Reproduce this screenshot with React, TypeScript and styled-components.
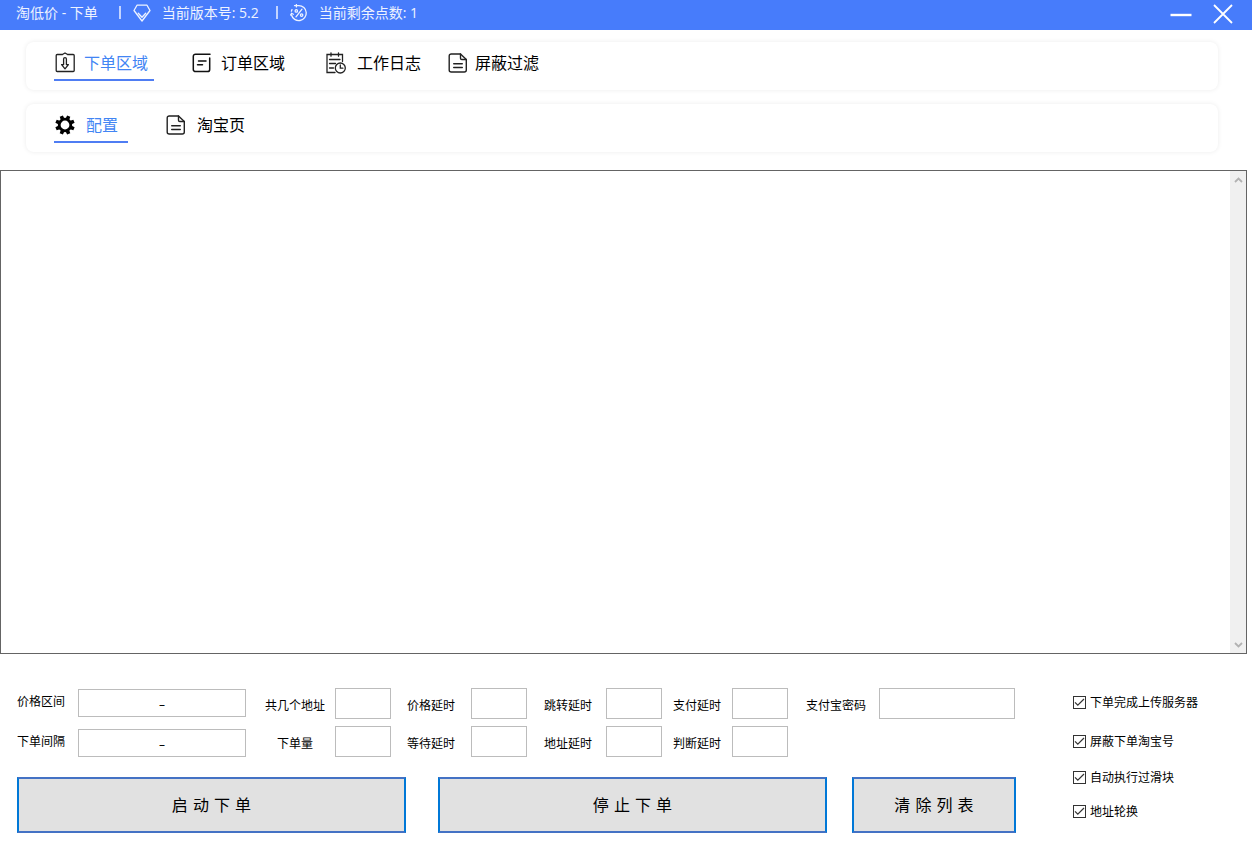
import React from "react";
import styled, { createGlobalStyle } from "styled-components";

const GlobalStyle = createGlobalStyle`
  *, *::before, *::after { box-sizing: border-box; }
  body {
    margin: 0;
    background: #fff;
    color: #000;
    font-family: "Open Sans", "Noto Sans CJK SC", sans-serif;
    font-size: 12px;
  }
  button, input { font: inherit; color: inherit; }
  svg { display: block; }
`;

const Page = styled.div`
  min-height: 100vh;
  display: flex;
  flex-direction: column;
`;

const TitleBar = styled.header`
  display: flex;
  align-items: center;
  height: 30px;
  flex: none;
  padding: 0 16px 2px;
  background: #477cfb;
  color: #eef3ff;
  font-size: 14px;
  line-height: 20px;
  white-space: nowrap;
`;

const TitleText = styled.h1`
  margin: 0 21px 2px 0;
  font-size: 14px;
  font-weight: 400;
`;

const TitleItem = styled.div`
  display: flex;
  align-items: center;
  gap: 11px;
  margin-right: 17px;
  padding: 0 0 2px 14px;
  position: relative;

  &::before {
    content: "";
    position: absolute;
    left: 0;
    top: 3px;
    width: 2px;
    height: 13px;
    background: #c3d4ff;
  }
`;

const WindowControls = styled.div`
  display: flex;
  margin-left: auto;
  gap: 16px;
`;

const WindowButton = styled.button`
  width: 26px;
  height: 26px;
  padding: 0;
  border: 0;
  background: none;
  display: grid;
  place-items: center;
`;

const TabPanel = styled.nav`
  display: flex;
  align-items: flex-start;
  height: 48px;
  flex: none;
  margin: 12px 34px 2px 26px;
  padding: 7px 28px 0;
  border-radius: 8px;
  background: #fff;
  box-shadow: 0 0 5px rgba(0, 0, 0, 0.08);
`;

const Tab = styled.a<{ $active?: boolean; $gap: number; $after: number; $end?: number }>`
  display: flex;
  align-items: center;
  gap: ${(p) => p.$gap}px;
  height: 32px;
  margin-right: ${(p) => p.$after}px;
  padding: 0 ${(p) => p.$end ?? 0}px 2px 1px;
  border-bottom: 2px solid ${(p) => (p.$active ? "#4f7df3" : "transparent")};
  color: #000;
  font-size: 16px;
  line-height: 24px;
  text-decoration: none;
  white-space: nowrap;

  span { color: ${(p) => (p.$active ? "#4285f4" : "#000")}; }
`;

const ListBox = styled.section`
  flex: 1;
  min-height: 200px;
  display: flex;
  justify-content: flex-end;
  margin: 16px 5px 0 0;
  border: 1px solid #646464;
`;

const ScrollTrack = styled.div`
  width: 16px;
  display: flex;
  flex-direction: column;
  justify-content: space-between;
  background: #f0f0f0;
`;

const ScrollButton = styled.button`
  height: 17px;
  padding: 0;
  border: 0;
  background: none;
  display: grid;
  place-items: center;
`;

const Controls = styled.form`
  display: flex;
  flex: none;
  padding: 34px 0 13px 17px;
`;

const MainControls = styled.div`
  flex: 1;
  min-width: 0;
`;

const Fields = styled.div`
  display: grid;
  grid-template-columns: 248fr 142fr 137fr 129fr 133fr 210fr;
  height: 69px;
  margin-bottom: 20px;
`;

const FieldGroup = styled.div<{ $after: number; $range?: boolean }>`
  display: flex;
  flex-direction: column;
  justify-content: ${(p) => (p.$range ? "flex-end" : "flex-start")};
  gap: ${(p) => (p.$range ? 12 : 7)}px;
  padding-right: ${(p) => p.$after}px;
`;

const Field = styled.div<{ $label: number; $range?: boolean }>`
  display: grid;
  grid-template-columns: ${(p) => p.$label}px 1fr;
  align-items: center;
  height: ${(p) => (p.$range ? 28 : 31)}px;

  label {
    padding: ${(p) => (p.$range ? "0 0 2px" : "4px 0 0")};
    line-height: 18px;
    white-space: nowrap;
  }
`;

const CenteredLabel = styled.label`
  margin-right: 10px;
  text-align: center;
`;

const TextInput = styled.input`
  width: 100%;
  min-width: 0;
  height: 100%;
  padding: 2px 4px 0;
  border: 1px solid #bcbcbc;
  border-radius: 0;
  background: #fff;
  text-align: center;
  outline: none;
`;

const Actions = styled.div`
  display: grid;
  grid-template-columns: 421fr 414fr 164fr;
`;

const ActionButton = styled.button<{ $after?: number }>`
  height: 56px;
  margin-right: ${(p) => p.$after ?? 0}px;
  padding: 2px 6px 0;
  border: 2px solid;
  border-color: #4472c4 #0078d7;
  background: #e1e1e1;
  font-family: "DejaVu Sans", "Noto Sans CJK SC", sans-serif;
  font-size: 16px;
  line-height: 24px;
`;

const Options = styled.div`
  display: grid;
  grid-template-rows: 39px 36px 34px 14px;
  width: 179px;
  margin: 7px 0 0 57px;
`;

const Option = styled.label`
  display: flex;
  align-items: center;
  gap: 4px;
  height: 14px;
  white-space: nowrap;
`;

const CheckCell = styled.span`
  display: grid;

  > * { grid-area: 1 / 1; }
  svg { pointer-events: none; visibility: hidden; }
  input:checked + svg { visibility: visible; }
`;

const CheckInput = styled.input`
  appearance: none;
  width: 13px;
  height: 13px;
  margin: 0;
  border: 1px solid #333;
  background: #fff;
`;

const DiamondIcon = () => (
  <svg width="18" height="18" viewBox="0 0 18 18" fill="none" stroke="currentColor" strokeWidth="1.3" strokeLinejoin="round" strokeLinecap="round">
    <path d="M4 1.2h10l3 5.3-8 10.5L1 6.5z" />
    <path d="M5.3 9.2L9 13.2l3.7-4" />
  </svg>
);

const PercentIcon = () => (
  <svg width="18" height="18" viewBox="0 0 18 18" fill="none" stroke="currentColor" strokeWidth="1.3" strokeLinecap="round">
    <path d="M4.5 1.6h4.3A7.5 7.5 0 1 1 1.5 11" />
    <path d="M6.4.5v2.4M.6 11l1-1.7 1.7.9M1.4 7.2l.6-1.6" />
    <path d="M12 5.2l-6 7.6" />
    <circle cx="6.3" cy="6.9" r="1.2" />
    <circle cx="11.6" cy="11.1" r="1.2" />
  </svg>
);

const DownBoxIcon = () => (
  <svg width="20" height="22" viewBox="0 0 20 22" fill="none" stroke="#222" strokeWidth="1.3" strokeLinejoin="round">
    <path d="M7.5 2.5H2.2a1 1 0 0 0-1 1v15a1 1 0 0 0 1 1h16a1 1 0 0 0 1-1v-15a1 1 0 0 0-1-1h-5.7" />
    <path d="M7 2.8l3-1.8 3 1.8" />
    <path d="M8.6 7a1.4 1.4 0 0 1 2.8 0v5.6h2L10 16.8l-3.4-4.2h2z" />
  </svg>
);

const OrderIcon = () => (
  <svg width="20" height="20" viewBox="0 0 20 20" fill="none" stroke="#111" strokeWidth="1.5" strokeLinecap="round">
    <path d="M18 1.2H3.5a2.2 2.2 0 0 0-2.2 2.2v13a2.2 2.2 0 0 0 2.2 2.2h12a2.2 2.2 0 0 0 2.2-2.2V5" />
    <path d="M6.5 8H14M5.5 11.8h5" />
  </svg>
);

const LogIcon = () => (
  <svg width="20" height="22" viewBox="0 0 20 22" fill="none" stroke="#222" strokeWidth="1.3" strokeLinecap="round">
    <path d="M9 20.5H1V2.5h15.5V9.5M5 .8v3.4M12.5 .8v3.4M3.5 7.5H14M3.5 11.5h6M3.5 16h4" />
    <circle cx="14.3" cy="16" r="5" />
    <path d="M14.3 13v3.2h2.6" />
  </svg>
);

const DocIcon = () => (
  <svg width="20" height="20" viewBox="0 0 20 20" fill="none" stroke="#222" strokeWidth="1.4" strokeLinejoin="round" strokeLinecap="round">
    <path d="M12.5 1H3.2a2 2 0 0 0-2 2v14a2 2 0 0 0 2 2h13.1a2 2 0 0 0 2-2V6.5z" />
    <path d="M12.5 1v4.2a1.3 1.3 0 0 0 1.3 1.3h4.5M5.7 10.7h8.6M5.7 14.5h8.6" />
  </svg>
);

const GearIcon = () => (
  <svg width="20" height="20" viewBox="0 0 20 20">
    {[0, 45, 90, 135, 180, 225, 270, 315].map((angle) => (
      <path key={angle} d="M8 4.5L8.3.3h3.4l.3 4.2z" transform={`rotate(${angle + 22.5} 10 10)`} />
    ))}
    <circle cx="10" cy="10" r="5.8" fill="none" stroke="#000" strokeWidth="2.8" />
  </svg>
);

const CheckMark = () => (
  <svg width="13" height="13" viewBox="0 0 13 13" fill="none" stroke="#333" strokeWidth="1.2">
    <path d="M2 6.3L4.8 9.2 11 3" />
  </svg>
);

const ArrowIcon = ({ down }: { down?: boolean }) => (
  <svg width="9" height="8" viewBox="0 0 9 8" fill="none" stroke="#b2b2b2" strokeWidth="1.8">
    <path d={down ? "M1 2l3.5 3.5L8 2" : "M1 6l3.5-3.5L8 6"} />
  </svg>
);

type FieldSpec = { id: string; text: string };
type GroupSpec = { label: number; after: number; range?: boolean; centered?: boolean; fields: FieldSpec[] };

const groups: GroupSpec[] = [
  { label: 61, after: 19, range: true, fields: [{ id: "price-range", text: "价格区间" }, { id: "order-interval", text: "下单间隔" }] },
  { label: 70, after: 16, centered: true, fields: [{ id: "address-count", text: "共几个地址" }, { id: "order-count", text: "下单量" }] },
  { label: 64, after: 17, fields: [{ id: "price-delay", text: "价格延时" }, { id: "wait-delay", text: "等待延时" }] },
  { label: 62, after: 11, fields: [{ id: "jump-delay", text: "跳转延时" }, { id: "address-delay", text: "地址延时" }] },
  { label: 59, after: 18, fields: [{ id: "pay-delay", text: "支付延时" }, { id: "judge-delay", text: "判断延时" }] },
  { label: 73, after: 1, fields: [{ id: "alipay-password", text: "支付宝密码" }] },
];

const options = ["下单完成上传服务器", "屏蔽下单淘宝号", "自动执行过滑块", "地址轮换"];

export default function App() {
  return (
    <Page>
      <GlobalStyle />
      <TitleBar>
        <TitleText>淘低价 - 下单</TitleText>
        <TitleItem>
          <DiamondIcon />
          当前版本号: 5.2
        </TitleItem>
        <TitleItem>
          <PercentIcon />
          当前剩余点数: 1
        </TitleItem>
        <WindowControls>
          <WindowButton type="button" aria-label="最小化">
            <svg width="22" height="20" viewBox="0 0 22 20" stroke="#fff" strokeWidth="2.4">
              <path d="M.5 11h21" />
            </svg>
          </WindowButton>
          <WindowButton type="button" aria-label="关闭">
            <svg width="20" height="20" viewBox="0 0 20 20" stroke="#fff" strokeWidth="1.8">
              <path d="M1 1l18 18M19 1L1 19" />
            </svg>
          </WindowButton>
        </WindowControls>
      </TitleBar>

      <TabPanel>
        <Tab href="#order" $active $gap={9} $after={37} $end={6}><DownBoxIcon /><span>下单区域</span></Tab>
        <Tab href="#orders" $gap={9} $after={40}><OrderIcon /><span>订单区域</span></Tab>
        <Tab href="#log" $gap={11} $after={26}><LogIcon /><span>工作日志</span></Tab>
        <Tab href="#filter" $gap={7} $after={0}><DocIcon /><span>屏蔽过滤</span></Tab>
      </TabPanel>
      <TabPanel>
        <Tab href="#config" $active $gap={11} $after={37} $end={10}><GearIcon /><span>配置</span></Tab>
        <Tab href="#taobao" $gap={11} $after={0}><DocIcon /><span>淘宝页</span></Tab>
      </TabPanel>

      <ListBox aria-label="列表">
        <ScrollTrack>
          <ScrollButton type="button" aria-label="向上"><ArrowIcon /></ScrollButton>
          <ScrollButton type="button" aria-label="向下"><ArrowIcon down /></ScrollButton>
        </ScrollTrack>
      </ListBox>

      <Controls onSubmit={(e) => e.preventDefault()}>
        <MainControls>
          <Fields>
            {groups.map((group) => (
              <FieldGroup key={group.fields[0].id} $after={group.after} $range={group.range}>
                {group.fields.map(({ id, text }) => (
                  <Field key={id} $label={group.label} $range={group.range}>
                    {group.centered ? (
                      <CenteredLabel htmlFor={id}>{text}</CenteredLabel>
                    ) : (
                      <label htmlFor={id}>{text}</label>
                    )}
                    <TextInput
                      id={id}
                      type={id === "alipay-password" ? "password" : "text"}
                      defaultValue={group.range ? "–" : ""}
                    />
                  </Field>
                ))}
              </FieldGroup>
            ))}
          </Fields>
          <Actions>
            <ActionButton type="button" $after={32}>启 动 下 单</ActionButton>
            <ActionButton type="button" $after={25}>停 止 下 单</ActionButton>
            <ActionButton type="button">清 除 列 表</ActionButton>
          </Actions>
        </MainControls>
        <Options>
          {options.map((text) => (
            <Option key={text}>
              <CheckCell>
                <CheckInput type="checkbox" defaultChecked />
                <CheckMark />
              </CheckCell>
              {text}
            </Option>
          ))}
        </Options>
      </Controls>
    </Page>
  );
}
